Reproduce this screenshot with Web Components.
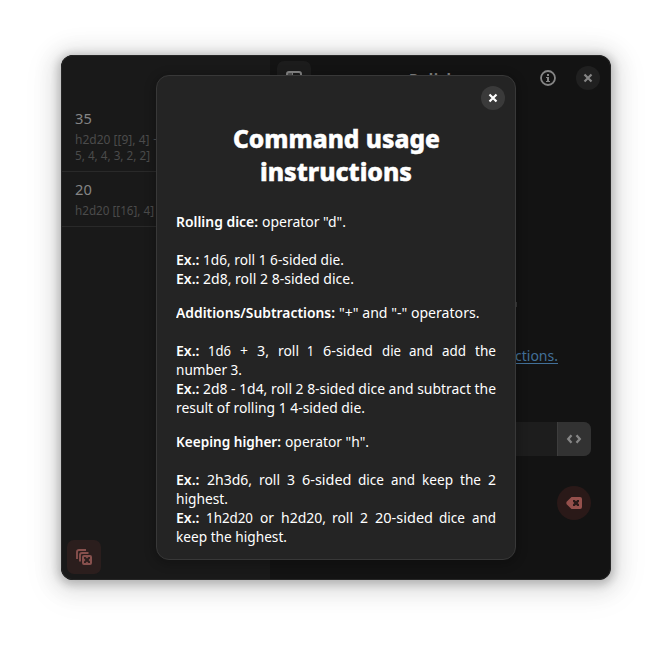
<!DOCTYPE html>
<html lang="en"><head><meta charset="utf-8"><title>Dice roller</title>
<style>body{margin:0;background:#fff;font-family:"Noto Sans",sans-serif}</style></head><body>
<dice-app></dice-app>
<script>
/* Text scaled horizontally to a given width in pixels. */
class FitText extends HTMLElement{
 connectedCallback(){
  const r=this.attachShadow({mode:'open'});
  r.innerHTML='<style>:host{display:inline-block;white-space:nowrap}:host([strong]){font-weight:var(--strong,650)}span{display:inline-block;transform-origin:0 50%;text-decoration:inherit;text-underline-offset:2px}</style><span><slot></slot></span>';
  const s=r.querySelector('span'),w=+this.getAttribute('w');
  if(w){const n=s.getBoundingClientRect().width;s.style.transform='scaleX('+w/n+')';this.style.width=w+'px'}
 }}
class TextLine extends HTMLElement{
 connectedCallback(){
  this.attachShadow({mode:'open'}).innerHTML='<style>:host{display:flex;gap:3.5px;height:19px;line-height:19px;white-space:nowrap}:host([justify]){justify-content:space-between}</style><slot></slot>'}}
class IconButton extends HTMLElement{
 connectedCallback(){
  const p={
   close:'<path d="m4.5 4.5 7 7m0-7-7 7" stroke="currentColor" stroke-width="2.2"/>',
   info:'<circle cx="8" cy="8" r="7" fill="none" stroke="currentColor" stroke-width="1.8"/><path d="M7 4h2v2H7zM6 7h3v4h1v1H6v-1h1V8H6z" fill="currentColor"/>',
   panel:'<rect x="1" y="2" width="14" height="12" rx="2" fill="none" stroke="currentColor" stroke-width="2"/><path d="M2 3h4v10H2z" fill="currentColor" opacity=".5"/><path d="M6 3h1v10H6z" fill="currentColor"/>',
   code:'<path d="M5.5 4.200 2.200 8l3.300 3.800M10.500 4.200 13.800 8l-3.300 3.800" fill="none" stroke="currentColor" stroke-width="2.300"/>',
   back:'<path fill-rule="evenodd" fill="currentColor" d="M5.500 2H14q2 0 2 2v8q0 2-2 2H5.500L.6 9.200Q0 8 .6 6.800zM7 5v1.700L8.300 8 7 9.300V11h1.700L10 9.700l1.300 1.300H13V9.300L11.700 8 13 6.700V5h-1.700L10 6.300 8.700 5z"/>',
   clear:'<path d="M1 10V3q0-2 2-2h7M4 12.500V6q0-2 2-2h6.500" fill="none" stroke="currentColor" stroke-width="1.900"/><path fill-rule="evenodd" fill="currentColor" d="M8 6h6q2 0 2 2v6q0 2-2 2H8q-2 0-2-2V8q0-2 2-2zM8 8v1.500L9.500 11 8 12.500V14h1.500l1.500-1.500 1.500 1.500H14v-1.500L12.500 11 14 9.500V8h-1.500L11 9.500 9.500 8z"/>'
  };
  this.attachShadow({mode:'open'}).innerHTML='<style>:host{display:grid;place-items:center;width:var(--s,24px);height:var(--s,24px);border-radius:var(--r,50%);background:var(--bg,transparent);color:var(--c,#858585);flex:none}svg{display:block}</style><svg width="16" height="16" viewBox="0 0 16 16">'+p[this.getAttribute('icon')]+'</svg>'}}
class RollItem extends HTMLElement{
 connectedCallback(){
  this.attachShadow({mode:'open'}).innerHTML='<style>:host{display:block;box-sizing:border-box;height:var(--h);padding:7px 0 0 14px;border-bottom:1px solid #292929;color:#4b4b4b;font-size:12.2px;line-height:16px;white-space:nowrap}.n{color:#858585;font-size:14.67px;line-height:20px;margin-bottom:4px}</style><div class="n"><slot name="n"></slot></div><slot></slot>'}}
class HelpDialog extends HTMLElement{
 connectedCallback(){
  this.attachShadow({mode:'open'}).innerHTML=`<style>
:host{display:block;box-sizing:border-box;width:360px;height:485px;border:1px solid #383838;border-radius:13px;background:#242424;color:#fff;box-shadow:0 2px 10px 3px #0003;padding:10px 19px 0;font-size:14.67px}
header{display:flex;justify-content:flex-end;margin-right:-9px}
icon-button{--bg:#3a3a3a;--c:#fff}
h1{margin:12px 0 24px;text-align:center;font-size:25.5px;line-height:33px;font-weight:850;color:#fff;-webkit-text-stroke:.5px #fff}
h1 fit-text{display:block;margin:auto}
section{margin-bottom:15px}
text-line.gap{margin-bottom:19px}
</style><header><icon-button icon="close"></icon-button></header>
<h1><fit-text w="207">Command usage</fit-text><fit-text w="152">instructions</fit-text></h1>
<section><text-line class="gap"><fit-text strong w="82">Rolling dice:</fit-text><fit-text w="84">operator "d".</fit-text></text-line>
<text-line><fit-text strong w="23.500">Ex.:</fit-text><fit-text w="141">1d6, roll 1 6-sided die.</fit-text></text-line>
<text-line><fit-text strong w="23.500">Ex.:</fit-text><fit-text w="151">2d8, roll 2 8-sided dice.</fit-text></text-line></section>
<section><text-line class="gap"><fit-text strong w="159">Additions/Subtractions:</fit-text><fit-text w="140.500">"+" and "-" operators.</fit-text></text-line>
<text-line justify><fit-text strong w="23.500">Ex.:</fit-text><fit-text w="23">1d6</fit-text><fit-text w="8">+</fit-text><fit-text w="12">3,</fit-text><fit-text w="21">roll</fit-text><fit-text w="7">1</fit-text><fit-text w="49.500">6-sided</fit-text><fit-text w="19">die</fit-text><fit-text w="24">and</fit-text><fit-text w="24">add</fit-text><fit-text w="21">the</fit-text></text-line>
<text-line><fit-text w="66">number 3.</fit-text></text-line>
<text-line><fit-text strong w="23.500">Ex.:</fit-text><fit-text w="293">2d8 - 1d4, roll 2 8-sided dice and subtract the</fit-text></text-line>
<text-line><fit-text w="189">result of rolling 1 4-sided die.</fit-text></text-line></section>
<section><text-line class="gap"><fit-text strong w="105">Keeping higher:</fit-text><fit-text w="84">operator "h".</fit-text></text-line>
<text-line justify><fit-text strong w="23.500">Ex.:</fit-text><fit-text w="45">2h3d6,</fit-text><fit-text w="21">roll</fit-text><fit-text w="8">3</fit-text><fit-text w="49.500">6-sided</fit-text><fit-text w="26">dice</fit-text><fit-text w="24">and</fit-text><fit-text w="31">keep</fit-text><fit-text w="21">the</fit-text><fit-text w="8">2</fit-text></text-line>
<text-line><fit-text w="52">highest.</fit-text></text-line>
<text-line justify><fit-text strong w="23.500">Ex.:</fit-text><fit-text w="47">1h2d20</fit-text><fit-text w="14">or</fit-text><fit-text w="45">h2d20,</fit-text><fit-text w="21">roll</fit-text><fit-text w="8">2</fit-text><fit-text w="58">20-sided</fit-text><fit-text w="26">dice</fit-text><fit-text w="24">and</fit-text></text-line>
<text-line><fit-text w="111">keep the highest.</fit-text></text-line></section>`}}
class DiceApp extends HTMLElement{
 connectedCallback(){
  this.attachShadow({mode:'open'}).innerHTML=`<style>
:host{display:block;box-sizing:border-box;width:672px;height:647px;padding:55px 61px}
.win{position:relative;display:grid;grid-template-columns:209px 341px;width:550px;height:525px;border-radius:12px;overflow:hidden;background:#131313}
.shadow{border-radius:12px;width:550px;height:525px;box-shadow:0 2px 8px 3px #0003,0 3px 20px 10px #00000017,0 6px 32px 16px #00000008}
.win:after{content:"";position:absolute;inset:0;border:1px solid #262626;border-radius:12px;pointer-events:none}
aside{background:#191919;display:flex;flex-direction:column;padding-top:46px;box-sizing:border-box}
aside icon-button{margin:auto 0 6px 6px;--s:34px;--r:7px;--bg:#2b1e1d;--c:#87504d}
main{display:flex;flex-direction:column}
.bar{box-sizing:border-box;display:grid;grid-template-columns:34px 1fr 24px 24px;column-gap:16px;padding:6px 11px 0 7px;height:46px;align-items:start}
.bar icon-button:not(.panel){margin-top:5px}
.bar b{color:#858585;font-size:14.67px;line-height:34px;padding-left:82px;letter-spacing:.5px}
.panel{--s:34px;--r:7px;--bg:#1c1c1c}.close{--bg:#202020}
.end{width:2px;height:5px;background:#383838;margin:201px 0 0 245px}
.link{color:#427099;font-size:14.67px;line-height:20px;text-decoration:underline;margin:38px 53px 0 0;align-self:flex-end}
.entry{display:flex;justify-content:flex-end;width:301px;height:34px;margin:57px 0 0 20px;background:#1d1d1d;border-radius:7px;overflow:hidden}
.entry icon-button{--s:34px;--r:0;--bg:#323232;box-shadow:inset 1px 0 #3d3d3d}
.del{--s:34px;--bg:#2a1918;--c:#95504c;margin:30px 20px 0 auto}
help-dialog{position:absolute;left:95px;top:20px}
</style><div class="shadow"><div class="win">
<aside><roll-item style="--h:71px"><span slot="n">35</span><fit-text w="74.500">h2d20 [[9], 4]</fit-text> <fit-text w="8">+</fit-text><br><fit-text w="75">5, 4, 4, 3, 2, 2]</fit-text></roll-item>
<roll-item style="--h:55px"><span slot="n">20</span><fit-text w="79">h2d20 [[16], 4]</fit-text></roll-item><icon-button icon="clear"></icon-button></aside>
<main><div class="bar"><icon-button class="panel" icon="panel"></icon-button><b>Rolisk</b><icon-button icon="info"></icon-button><icon-button class="close" icon="close"></icon-button></div>
<div class="end"></div><fit-text class="link" w="43">ctions.</fit-text>
<div class="entry"><icon-button icon="code"></icon-button></div><icon-button class="del" icon="back"></icon-button></main>
<help-dialog></help-dialog></div></div>`}}
customElements.define('fit-text',FitText);customElements.define('text-line',TextLine);customElements.define('icon-button',IconButton);customElements.define('roll-item',RollItem);customElements.define('help-dialog',HelpDialog);customElements.define('dice-app',DiceApp);
</script></body></html>
